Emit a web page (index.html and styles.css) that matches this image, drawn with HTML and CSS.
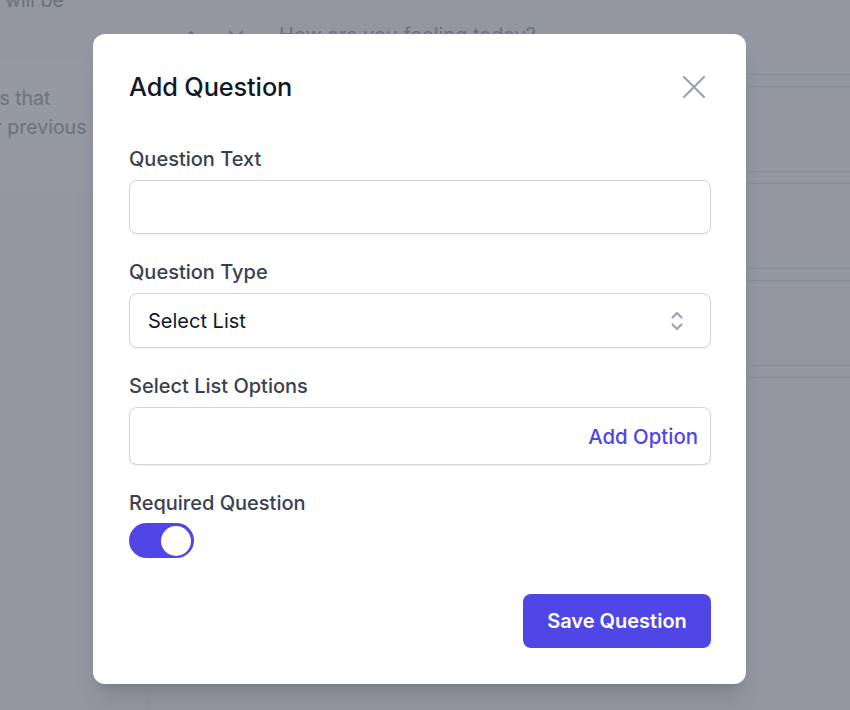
FILE: index.html
```html
<!DOCTYPE html>
<html lang="en">
<head>
<meta charset="utf-8">
<title>Add Question</title>
<link rel="stylesheet" href="styles.css">
</head>
<body>
<div class="page">
  <aside class="sidebar">
    <p class="side-top">the participant will be</p>
    <div class="side-box">
      <p class="side-text">Ask questions that<br>relate to their previous</p>
    </div>
  </aside>
  <main class="main">
    <div class="q-row">
      <span class="arrow">
        <svg width="16" height="10" viewBox="0 0 16 10"><path d="M2 8 L8 2 L14 8" fill="none" stroke="#6b7280" stroke-width="2" stroke-linecap="round" stroke-linejoin="round"/></svg>
      </span>
      <span class="arrow">
        <svg width="16" height="10" viewBox="0 0 16 10"><path d="M2 2 L8 8 L14 2" fill="none" stroke="#6b7280" stroke-width="2" stroke-linecap="round" stroke-linejoin="round"/></svg>
      </span>
      <span class="q-title">How are you feeling today?</span>
    </div>
    <div class="q-card">
      <div class="q-line"></div>
      <div class="q-line"></div>
      <div class="q-line"></div>
      <div class="q-line"></div>
    </div>
  </main>
</div>

<div class="overlay">
  <div class="modal">
    <div class="modal-head">
      <h2 class="modal-title">Add Question</h2>
      <button class="close" aria-label="Close">
        <svg width="24" height="24" viewBox="0 0 24 24"><path d="M2 2 L22 22 M22 2 L2 22" fill="none" stroke="#9ca3af" stroke-width="2.2" stroke-linecap="round"/></svg>
      </button>
    </div>

    <div class="field">
      <label class="label">Question Text</label>
      <div class="input"></div>
    </div>

    <div class="field">
      <label class="label">Question Type</label>
      <div class="input select">
        <span class="select-value">Select List</span>
        <svg class="updown" width="16" height="22" viewBox="0 0 16 22"><path d="M3.5 7.5 L8 3 L12.5 7.5 M3.5 14.5 L8 19 L12.5 14.5" fill="none" stroke="#9ca3af" stroke-width="2.2" stroke-linecap="round" stroke-linejoin="round"/></svg>
      </div>
    </div>

    <div class="field">
      <label class="label">Select List Options</label>
      <div class="input options">
        <span class="add-option">Add Option</span>
      </div>
    </div>

    <div class="field">
      <label class="label label-tight">Required Question</label>
      <div class="toggle"><span class="knob"></span></div>
    </div>

    <div class="actions">
      <button class="save">Save Question</button>
    </div>
  </div>
</div>
</body>
</html>
```

FILE: styles.css
```css
* { box-sizing: border-box; }

html, body {
  margin: 0;
  padding: 0;
  width: 850px;
  height: 710px;
  overflow: hidden;
}

body {
  font-family: Inter, "Noto Sans", "Liberation Sans", sans-serif;
  background: #f6f7f9;
  position: relative;
}

/* background page */
.page {
  display: flex;
  height: 710px;
}

.sidebar {
  width: 149px;
  flex: none;
  border-right: 1px solid #e5e7eb;
  overflow: hidden;
  background: #f6f7f9;
}

.side-top {
  margin: -14px 0 0 -134px;
  font-size: 19.5px;
  line-height: 29px;
  color: #6b7280;
  white-space: nowrap;
}

.side-box {
  margin-top: 47px;
  height: 130px;
  background: #ffffff;
  padding-top: 22px;
}

.side-text {
  margin: 0 0 0 -120px;
  font-size: 19.5px;
  line-height: 29px;
  color: #6b7280;
  white-space: nowrap;
}

.main {
  flex: 1;
  padding: 21px 0 0 34px;
}

.q-row {
  display: flex;
  align-items: center;
  gap: 29px;
  height: 28px;
}

.arrow {
  display: flex;
  width: 16px;
  justify-content: center;
}

.q-title {
  margin-left: 6px;
  font-size: 20px;
  color: #6b7280;
}

.q-card {
  margin: 22px 0 0 0;
  display: flex;
  flex-direction: column;
  gap: 84px;
  padding-top: 3px;
}

.q-line {
  height: 13px;
  border-top: 1px solid #d1d5db;
  border-bottom: 1px solid #d1d5db;
}

/* overlay + modal */
.overlay {
  position: absolute;
  inset: 0;
  background: rgba(107, 114, 128, 0.72);
  padding: 34px 0 0 93px;
}

.modal {
  width: 653px;
  height: 650px;
  background: #ffffff;
  border-radius: 12px;
  padding: 37px 35px 36px 36px;
  box-shadow: 0 20px 25px -5px rgba(0,0,0,0.1), 0 8px 10px -6px rgba(0,0,0,0.1);
  display: flex;
  flex-direction: column;
}

.modal-head {
  display: flex;
  justify-content: space-between;
  align-items: center;
  height: 32px;
  margin-bottom: 43px;
}

.modal-title {
  margin: 0;
  font-size: 25.3px;
  line-height: 32px;
  font-weight: 500;
  color: #111827;
  letter-spacing: -0.1px;
}

.close {
  border: 0;
  background: none;
  padding: 0;
  margin-right: 5px;
  width: 24px;
  height: 24px;
  display: flex;
}

.field {
  display: flex;
  flex-direction: column;
  margin-bottom: 25px;
}

.label {
  font-size: 20px;
  line-height: 26px;
  font-weight: 500;
  color: #374151;
  margin-bottom: 8px;
}

.label-tight { margin-bottom: 7px; }

.input {
  height: 54px;
  border: 1px solid #d1d5db;
  border-radius: 8px;
  background: #ffffff;
  box-shadow: 0 1px 2px rgba(0,0,0,0.06);
}

.select {
  height: 55px;
  display: flex;
  align-items: center;
  justify-content: space-between;
  padding: 0 25px 0 18px;
}

.select-value {
  font-size: 20px;
  color: #111827;
}

.options {
  height: 58px;
  display: flex;
  align-items: center;
  justify-content: flex-end;
  padding-right: 12px;
}

.add-option {
  font-size: 20.4px;
  font-weight: 500;
  color: #4f46e5;
  margin-top: 1px;
}

.toggle {
  width: 65px;
  height: 35px;
  border-radius: 18px;
  background: #4f46e5;
  display: flex;
  align-items: center;
  justify-content: flex-end;
  padding-right: 3px;
}

.knob {
  width: 30px;
  height: 30px;
  border-radius: 50%;
  background: #ffffff;
}

.actions {
  margin-top: auto;
  display: flex;
  justify-content: flex-end;
}

.save {
  width: 188px;
  height: 54px;
  border: 0;
  border-radius: 8px;
  background: #4f46e5;
  color: #ffffff;
  font-family: Inter, "Noto Sans", "Liberation Sans", sans-serif;
  font-size: 20px;
  font-weight: 600;
}
```
